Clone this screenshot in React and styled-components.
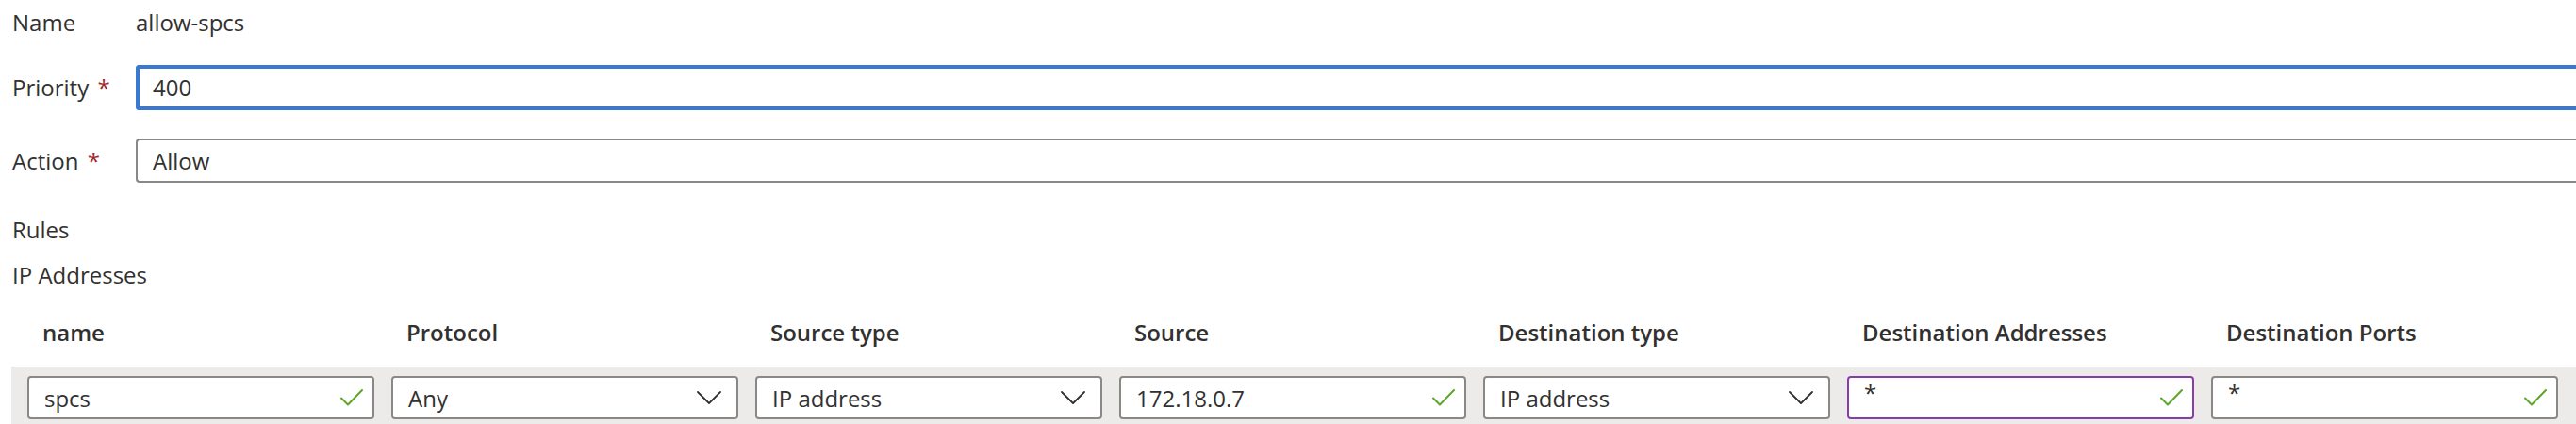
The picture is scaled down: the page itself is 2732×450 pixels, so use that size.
import React from "react";
import styled, { createGlobalStyle } from "styled-components";

const GlobalStyle = createGlobalStyle`
  html, body {
    margin: 0;
    padding: 0;
    background: #ffffff;
    overflow: hidden;
  }
  body {
    font-family: "Open Sans", "Noto Sans", "Liberation Sans", sans-serif;
    font-size: 24px;
    color: #323130;
  }
`;

const Page = styled.div`
  width: 2732px;
  height: 450px;
  overflow: hidden;
  box-sizing: border-box;
`;

const Form = styled.div`
  display: flex;
  flex-direction: column;
  padding-left: 13px;
`;

const FieldRow = styled.div`
  display: flex;
  align-items: center;
  height: 47px;
  margin-bottom: ${(p) => p.$spacing}px;
`;

const Label = styled.div`
  width: 131px;
  flex: none;
  white-space: nowrap;
`;

const Required = styled.span`
  color: #a4262c;
  margin-left: 3px;
`;

const StaticValue = styled.div`
  white-space: nowrap;
`;

const TextBox = styled.div`
  flex: 1;
  height: ${(p) => (p.$focused ? 48 : 47)}px;
  box-sizing: border-box;
  border: ${(p) => (p.$focused ? "4px solid #3a79d1" : "2px solid #8a8886")};
  border-right: none;
  border-radius: 4px 0 0 4px;
  display: flex;
  align-items: center;
  padding-left: ${(p) => (p.$focused ? 14 : 16)}px;
  margin-right: -20px;
  background: #ffffff;
`;

const SectionTitle = styled.div`
  line-height: 48px;
  padding-left: 13px;
`;

const HeaderRow = styled.div`
  display: flex;
  gap: 18px;
  padding-left: 29px;
  margin-top: 13px;
  margin-bottom: 12px;
  line-height: 48px;
  font-weight: 600;
`;

const HeaderCell = styled.div`
  width: 368px;
  flex: none;
  box-sizing: border-box;
  padding-left: 16px;
  white-space: nowrap;
`;

const DataRow = styled.div`
  display: flex;
  gap: 18px;
  margin-left: 12px;
  padding: 10px 0 10px 17px;
  background: #edebe9;
`;

const Field = styled.div`
  width: 368px;
  height: 46px;
  flex: none;
  box-sizing: border-box;
  border: 2px solid ${(p) => p.$accent || "#8a8886"};
  border-radius: 4px;
  background: #ffffff;
  display: flex;
  align-items: center;
  justify-content: space-between;
  padding-left: 16px;
  padding-right: ${(p) => (p.$kind === "select" ? 16 : 10)}px;
`;

const FieldText = styled.span`
  white-space: nowrap;
`;

const Star = styled.span`
  align-self: flex-start;
  margin-top: 4px;
  line-height: 24px;
`;

const DeleteButton = styled.div`
  width: 30px;
  height: 46px;
  flex: none;
  display: flex;
  align-items: center;
`;

const CheckIcon = () => (
  <svg width="24" height="18" viewBox="0 0 24 18" fill="none">
    <path d="M1 9.5 L8 16.5 L23 1" stroke="#5ea629" strokeWidth="2" strokeLinecap="round" strokeLinejoin="round" />
  </svg>
);

const ChevronIcon = () => (
  <svg width="26" height="14" viewBox="0 0 26 14" fill="none">
    <path d="M1 1 L13 13 L25 1" stroke="#323130" strokeWidth="1.8" strokeLinecap="round" strokeLinejoin="round" />
  </svg>
);

const TrashIcon = () => (
  <svg width="24" height="26" viewBox="0 0 24 26" fill="none">
    <path d="M1 5 H23 M8 5 V2 H16 V5 M4 5 L5.5 24 H18.5 L20 5 M10 10 V19 M14 10 V19" stroke="#0078d4" strokeWidth="1.6" />
  </svg>
);

const columns = [
  "name",
  "Protocol",
  "Source type",
  "Source",
  "Destination type",
  "Destination Addresses",
  "Destination Ports",
];

const cells = [
  { value: "spcs", kind: "text" },
  { value: "Any", kind: "select" },
  { value: "IP address", kind: "select" },
  { value: "172.18.0.7", kind: "text" },
  { value: "IP address", kind: "select" },
  { value: "*", kind: "text", accent: "#8a3bab" },
  { value: "*", kind: "text" },
];

export default function App() {
  return (
    <>
      <GlobalStyle />
      <Page>
        <Form>
          <FieldRow $spacing={22}>
            <Label>Name</Label>
            <StaticValue>allow-spcs</StaticValue>
          </FieldRow>
          <FieldRow $spacing={31}>
            <Label>
              Priority<Required> *</Required>
            </Label>
            <TextBox $focused>400</TextBox>
          </FieldRow>
          <FieldRow $spacing={26}>
            <Label>
              Action<Required> *</Required>
            </Label>
            <TextBox>Allow</TextBox>
          </FieldRow>
        </Form>
        <SectionTitle>Rules</SectionTitle>
        <SectionTitle>IP Addresses</SectionTitle>
        <HeaderRow>
          {columns.map((c) => (
            <HeaderCell key={c}>{c}</HeaderCell>
          ))}
        </HeaderRow>
        <DataRow>
          {cells.map((c, i) => (
            <Field key={i} $kind={c.kind} $accent={c.accent}>
              {c.value === "*" ? <Star>*</Star> : <FieldText>{c.value}</FieldText>}
              {c.kind === "select" ? <ChevronIcon /> : <CheckIcon />}
            </Field>
          ))}
          <DeleteButton>
            <TrashIcon />
          </DeleteButton>
        </DataRow>
      </Page>
    </>
  );
}
